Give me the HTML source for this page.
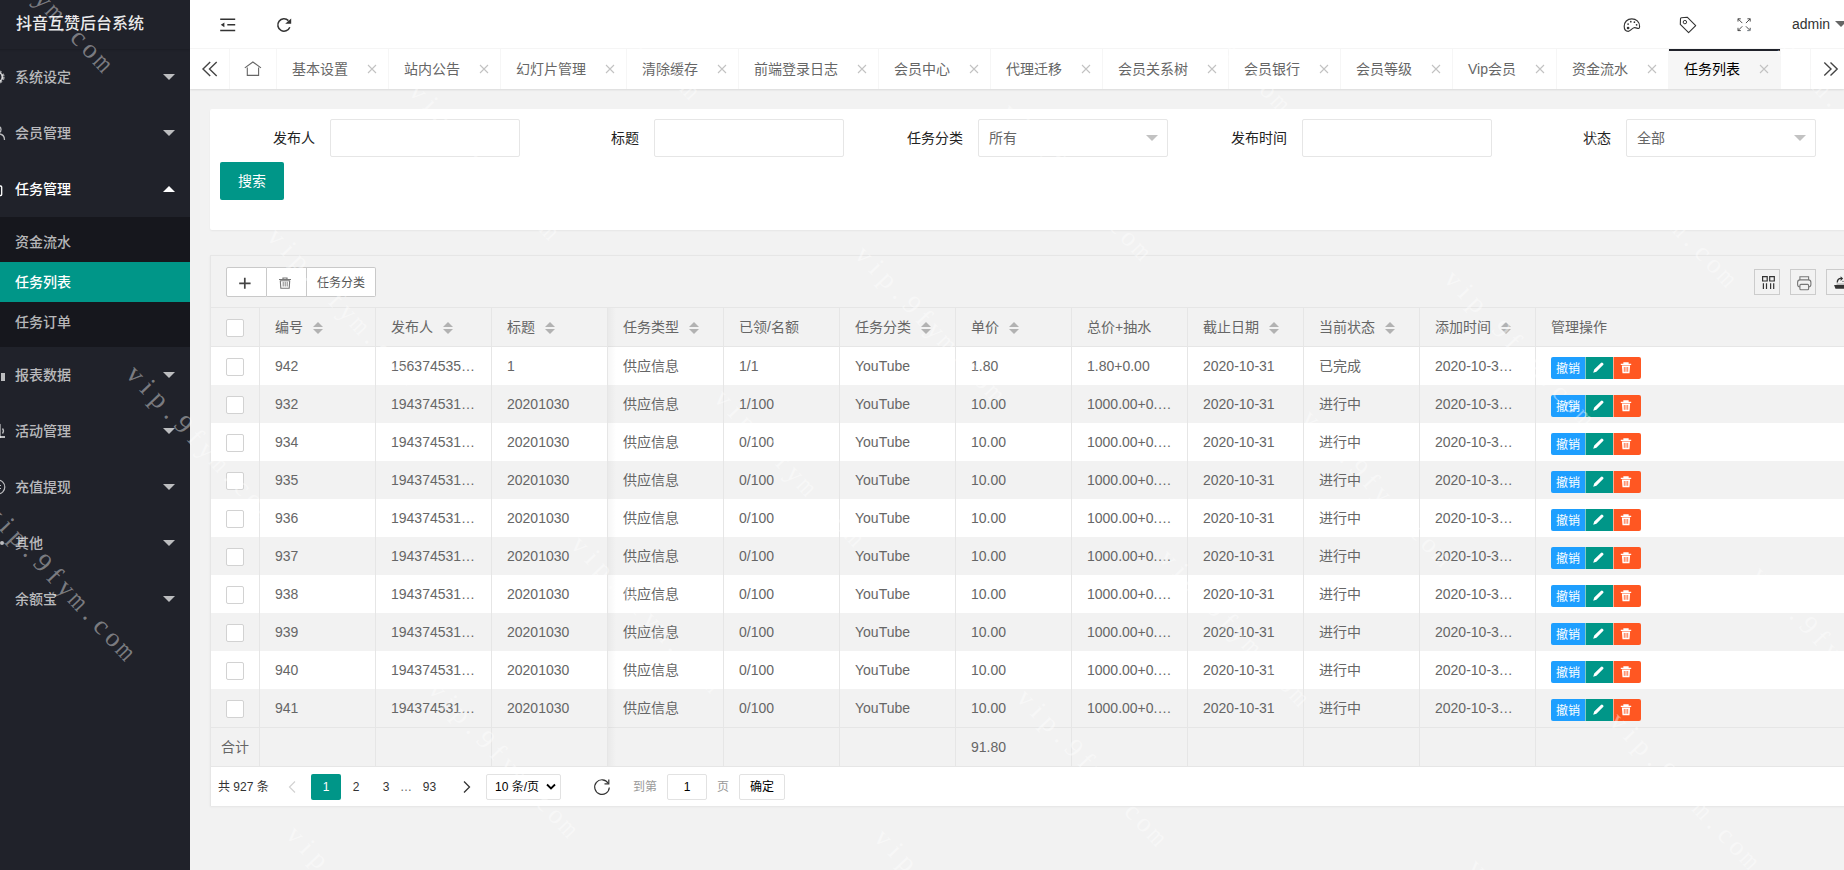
<!DOCTYPE html>
<html lang="zh-CN">
<head>
<meta charset="utf-8">
<title>抖音互赞后台系统</title>
<style>
*{box-sizing:border-box}
html,body{margin:0;padding:0}
body{width:1844px;height:870px;overflow:hidden;background:#f2f2f2;position:relative;
  font-family:"Liberation Sans","Noto Sans CJK SC",sans-serif;font-size:14px;line-height:24px;color:#333;-webkit-font-smoothing:antialiased}
a{text-decoration:none;color:inherit}
ul,li,dl,dd{margin:0;padding:0;list-style:none}
svg{display:block}
.abs{position:absolute}

/* ---------- side ---------- */
.side{position:absolute;left:0;top:0;width:190px;height:870px;background:#20222A;overflow:hidden;z-index:5;font-weight:500}
.logo{position:absolute;left:-30px;top:-1px;width:220px;height:50px;line-height:50px;text-align:center;color:rgba(255,255,255,.92);font-size:16px;box-shadow:0 1px 2px 0 rgba(0,0,0,.15)}
.nav{position:absolute;left:-30px;top:49px;width:220px}
.nav .item{position:relative;display:block}
.nav .item>a{display:block;position:relative;height:56px;line-height:56px;padding-left:45px;color:rgba(255,255,255,.7);font-size:14px}
.nav .item.open>a{color:#fff}
.nav .ico{position:absolute;left:20px;top:20px;width:16px;height:16px}
.nav .more{position:absolute;right:15px;top:25px;width:0;height:0;border:6px solid transparent;border-top-color:rgba(255,255,255,.7)}
.nav .item.open .more{top:19px;border-top-color:transparent;border-bottom-color:#fff}
.nav dl{background:rgba(0,0,0,.3);padding:5px 0}
.nav dd a{display:block;height:40px;line-height:40px;padding-left:45px;color:rgba(255,255,255,.7)}
.nav dd.this a{background:#009688;color:#fff}

/* ---------- header ---------- */
.header{position:absolute;left:190px;top:0;width:1654px;height:49px;background:#fff;border-bottom:1px solid #f6f6f6}
.header .hi{position:absolute}
.admin{position:absolute;left:1602px;top:0;height:48px;line-height:48px;color:#333;font-size:14px;white-space:nowrap}
.admin i{position:absolute;left:43px;top:21px;border:6px solid transparent;border-top-color:#666;width:0;height:0}

/* ---------- tabs ---------- */
.tabs{position:absolute;left:190px;top:49px;width:1654px;height:40px;background:#fff;box-shadow:0 1px 2px 0 rgba(0,0,0,.1);overflow:hidden}
.tabs .ctl{position:absolute;top:0;width:40px;height:40px;background:#fff}
.tabs .ctl.l{left:0;border-right:1px solid #f6f6f6}
.tabs .ctl.r{left:1620px;border-left:1px solid #f6f6f6}
.tabs ul{position:absolute;left:40px;top:0;height:40px;white-space:nowrap;font-size:0}
.tabs li{display:inline-block;vertical-align:top;position:relative;height:40px;line-height:40px;padding:0 40px 0 15px;border-right:1px solid #f6f6f6;font-size:14px;color:#666}
.tabs li.home{padding:0 15px;width:47px}
.tabs li.this{background:#f6f6f6;color:#000}
.tabs li.this:after{content:"";position:absolute;left:0;top:0;width:100%;height:2px;background:#20222A}
.tabs li .x{position:absolute;right:8px;top:12px;width:16px;height:16px}

/* ---------- search card ---------- */
.card{position:absolute;left:210px;top:109px;width:1700px;height:121px;background:#fff;border-radius:2px;box-shadow:0 1px 2px 0 rgba(0,0,0,.05)}
.flabel{position:absolute;top:10px;width:110px;height:38px;line-height:38px;padding:0 15px;text-align:right;color:#222;font-size:14px;white-space:nowrap}
.finput{position:absolute;top:10px;width:190px;height:38px;border:1px solid #e6e6e6;border-radius:2px;background:#fff;line-height:36px;padding-left:10px;color:#666;font-size:14px}
.finput i{position:absolute;right:9px;top:15px;width:0;height:0;border:6px solid transparent;border-top-color:#c2c2c2}
.btn{position:absolute;left:10px;top:53px;width:64px;height:38px;line-height:38px;background:#009688;color:#fff;text-align:center;border-radius:2px;font-size:14px}

/* ---------- table ---------- */
.tv{position:absolute;left:210px;top:255px;width:1700px;height:551px;border:1px solid #e6e6e6;border-bottom:none;background:#fff;box-shadow:0 1px 2px 0 rgba(0,0,0,.06)}
.tool{position:absolute;left:0;top:0;width:100%;height:52px;background:#f2f2f2;border-bottom:1px solid #e6e6e6}
.bg{position:absolute;left:15px;top:11px;height:30px;font-size:0;white-space:nowrap}
.bg span{display:inline-block;vertical-align:top;height:30px;line-height:30px;border:1px solid #c9c9c9;border-left:none;background:#fff;color:#555;font-size:12px;padding:0 10px;position:relative}
.bg span:first-child{border-left:1px solid #c9c9c9;border-radius:2px 0 0 2px}
.bg span:last-child{border-radius:0 2px 2px 0}
.bg span.ic{width:40px;padding:0}
.bg span.ic:first-child{width:41px}
.self{position:absolute;top:13px;width:26px;height:26px;border:1px solid #ccc}
table{border-collapse:separate;border-spacing:0;table-layout:fixed;position:absolute;left:0}
th,td{padding:0;border-right:1px solid #e6e6e6;height:38px;font-weight:normal;text-align:left;font-size:14px;color:#666}
th{background:#f2f2f2;border-bottom:1px solid #e6e6e6;height:39px}
.c{padding:0 15px;height:28px;line-height:28px;overflow:hidden;text-overflow:ellipsis;white-space:nowrap;position:relative}
tr.e td{background:#f2f2f2}
.cb{display:block;width:18px;height:18px;border:1px solid #d2d2d2;border-radius:2px;background:#fff;position:relative;top:6px;left:15px}
.sort{display:inline-block;vertical-align:middle;position:relative;width:10px;height:20px;margin-left:10px;top:-1px}
.sort:before,.sort:after{content:"";position:absolute;left:0;width:0;height:0;border:5px solid transparent}
.sort:before{top:0;border-bottom-color:#b2b2b2}
.sort:after{top:12px;border-top-color:#b2b2b2}
.ops{font-size:0;white-space:nowrap;height:22px;margin-top:5px}
.ops b{display:inline-block;vertical-align:top;height:22px;line-height:22px;font-size:12px;font-weight:normal;color:#fff;position:relative}
.ops .b1{line-height:24px;width:34px;background:#1E9FFF;border-radius:2px 0 0 2px;text-align:center}
.ops .b2{width:28px;background:#009688;border-left:1px solid rgba(255,255,255,.5)}
.ops .b3{width:28px;background:#FF5722;border-left:1px solid rgba(255,255,255,.5);border-radius:0 2px 2px 0}
.ops svg{position:absolute;left:5px;top:4px}
.total td{background:#f2f2f2;border-top:1px solid #e6e6e6;height:39px}
.page{position:absolute;left:0;top:510px;width:100%;height:40px;border-top:1px solid #e6e6e6;background:#fff;font-size:12px;color:#333}
.page .p{position:absolute;top:7px;height:26px;line-height:26px;white-space:nowrap}
.fixshadow{position:absolute;left:397px;top:52px;width:8px;height:458px;background:linear-gradient(to right,rgba(0,0,0,.035),rgba(0,0,0,0));pointer-events:none}
</style>
</head>
<body>
<div class="side">
  <div class="logo"><span>抖音互赞后台系统</span></div>
  <ul class="nav">
    <li class="item"><a><svg class="ico" viewBox="0 0 16 16"><circle cx="8" cy="8" r="5.2" fill="none" stroke="rgba(255,255,255,.55)" stroke-width="3" stroke-dasharray="2.6 1.5"/><circle cx="8" cy="8" r="4.4" fill="none" stroke="rgba(255,255,255,.7)" stroke-width="1.6"/></svg>系统设定<span class="more"></span></a></li>
    <li class="item"><a><svg class="ico" viewBox="0 0 16 16"><circle cx="8" cy="4.6" r="3" fill="none" stroke="rgba(255,255,255,.7)" stroke-width="1.3"/><path d="M1.5 15c0-4 2.6-6.2 6.5-6.2s6.5 2.2 6.5 6.2" fill="none" stroke="rgba(255,255,255,.7)" stroke-width="1.3"/></svg>会员管理<span class="more"></span></a></li>
    <li class="item open"><a><svg class="ico" viewBox="0 0 16 16"><rect x="0" y="5" width="11.700" height="9.500" rx="1" fill="none" stroke="#fff" stroke-width="1.300"/><path d="M3 5V2.500h5.500V5" fill="none" stroke="#fff" stroke-width="1.300"/></svg>任务管理<span class="more"></span></a>
      <dl>
        <dd><a>资金流水</a></dd>
        <dd class="this"><a>任务列表</a></dd>
        <dd><a>任务订单</a></dd>
      </dl>
    </li>
    <li class="item"><a><svg class="ico" viewBox="0 0 16 16"><path d="M1 14V8h3v6zM6 14V3h3v11zM11 14V6h4v8z" fill="rgba(255,255,255,.7)"/></svg>报表数据<span class="more"></span></a></li>
    <li class="item"><a><svg class="ico" viewBox="0 0 16 16"><path d="M2 6v4h3l5 4V2L5 6z" fill="none" stroke="rgba(255,255,255,.7)" stroke-width="1.3"/><path d="M12.5 5.5a4 4 0 0 1 0 5" fill="none" stroke="rgba(255,255,255,.7)" stroke-width="1.3"/><path d="M10 13h5v2h-5z" fill="rgba(255,255,255,.7)"/></svg>活动管理<span class="more"></span></a></li>
    <li class="item"><a><svg class="ico" viewBox="0 0 16 16"><circle cx="8" cy="8" r="6.8" fill="none" stroke="rgba(255,255,255,.7)" stroke-width="1.2"/><path d="M5 6.5h6M5 9.5h6M8 6.5V13" fill="none" stroke="rgba(255,255,255,.7)" stroke-width="1.2"/></svg>充值提现<span class="more"></span></a></li>
    <li class="item"><a><svg class="ico" viewBox="0 0 16 16"><circle cx="12" cy="8" r="2" fill="rgba(255,255,255,.7)"/><circle cx="4" cy="8" r="2" fill="rgba(255,255,255,.7)"/></svg>其他<span class="more"></span></a></li>
    <li class="item"><a>余额宝<span class="more"></span></a></li>
  </ul>
</div>
<div class="header">
  <svg class="hi" style="left:26px;top:14px" width="24" height="22" viewBox="216 14 24 22"><path d="M220.2 19.3H235.2M227.3 24.8H235.2M220.2 30.4H235.2" stroke="#333" stroke-width="1.5" fill="none"/><path d="M220.8 24.8L224.4 22.4V27.2Z" fill="#333"/></svg>
  <svg class="hi" style="left:84px;top:14px" width="22" height="22" viewBox="274 14 22 22"><path d="M288.4 20.6A6.2 6.2 0 1 0 289.8 27.2" stroke="#333" stroke-width="1.5" fill="none"/><path d="M291.2 18.4V23.8H285.2Z" fill="#333"/></svg>
  <svg class="hi" style="left:1430px;top:14px" width="24" height="22" viewBox="1620 14 24 22"><path d="M1639.600 26.400C1639.600 21.800 1636.200 18.800 1631.800 18.800C1627.200 18.800 1624.200 22.200 1624.200 26.300C1624.200 29.300 1626 31.300 1628.300 31.300C1630.500 31.300 1631.500 28.500 1634 27.800C1636 27.200 1637.500 28.900 1638.800 28.400C1639.400 28.100 1639.600 27.400 1639.600 26.400Z" fill="none" stroke="#333" stroke-width="1.150"/><circle cx="1628.100" cy="24.100" r=".850" fill="#333"/><circle cx="1630.800" cy="21.700" r=".850" fill="#333"/><circle cx="1634.400" cy="22.200" r=".850" fill="#333"/><circle cx="1636.600" cy="24.800" r=".850" fill="#333"/><circle cx="1628.100" cy="28" r="1.350" fill="#333"/></svg>
  <svg class="hi" style="left:1486px;top:14px" width="24" height="22" viewBox="1676 14 24 22"><path d="M1680.500 18.700Q1680.500 17.900 1681.400 17.800L1687.200 17.200L1695.700 25.600L1688.600 32.600L1680.300 24.400Z" fill="none" stroke="#333" stroke-width="1.100" stroke-linejoin="round"/><circle cx="1684.900" cy="22.100" r="1.700" fill="none" stroke="#333" stroke-width="1"/></svg>
  <svg class="hi" style="left:1544px;top:14px" width="20" height="22" viewBox="1734 14 20 22"><g fill="none" stroke="#444" stroke-width=".950"><path d="M1738 21.600v-2.800h2.800M1738 18.800l4.300 4.300"/><path d="M1750.200 21.600v-2.800h-2.800M1750.200 18.800l-4.300 4.300"/><path d="M1738 27.800v2.800h2.800M1738 30.600l4.300-4.300"/><path d="M1750.200 27.800v2.800h-2.800M1750.200 30.600l-4.300-4.300"/></g></svg>
  <div class="admin">admin<i></i></div>
</div>
<div class="tabs">
  <div class="ctl l"><svg class="abs" style="left:10px;top:10px" width="20" height="20" viewBox="200 59 20 20"><path d="M210.2 62.100L203 69L210.200 75.900M216.700 62.100L209.500 69L216.700 75.900" fill="none" stroke="#444" stroke-width="1.400"/></svg></div>
  <ul>
    <li class="home"><svg class="abs" style="left:13px;top:10px" width="20" height="20" viewBox="243 59 20 20"><path d="M244.800 67.900L252.900 62L261 67.900M247.300 67.600V75.400H258.600V67.600" fill="none" stroke="#666" stroke-width="1.100"/></svg></li>
    <li>基本设置<svg class="x" viewBox="0 0 16 16"><path d="M4 4l8 8M12 4l-8 8" stroke="#c2c2c2" stroke-width="1.100"/></svg></li>
    <li>站内公告<svg class="x" viewBox="0 0 16 16"><path d="M4 4l8 8M12 4l-8 8" stroke="#c2c2c2" stroke-width="1.100"/></svg></li>
    <li>幻灯片管理<svg class="x" viewBox="0 0 16 16"><path d="M4 4l8 8M12 4l-8 8" stroke="#c2c2c2" stroke-width="1.100"/></svg></li>
    <li>清除缓存<svg class="x" viewBox="0 0 16 16"><path d="M4 4l8 8M12 4l-8 8" stroke="#c2c2c2" stroke-width="1.100"/></svg></li>
    <li>前端登录日志<svg class="x" viewBox="0 0 16 16"><path d="M4 4l8 8M12 4l-8 8" stroke="#c2c2c2" stroke-width="1.100"/></svg></li>
    <li>会员中心<svg class="x" viewBox="0 0 16 16"><path d="M4 4l8 8M12 4l-8 8" stroke="#c2c2c2" stroke-width="1.100"/></svg></li>
    <li>代理迁移<svg class="x" viewBox="0 0 16 16"><path d="M4 4l8 8M12 4l-8 8" stroke="#c2c2c2" stroke-width="1.100"/></svg></li>
    <li>会员关系树<svg class="x" viewBox="0 0 16 16"><path d="M4 4l8 8M12 4l-8 8" stroke="#c2c2c2" stroke-width="1.100"/></svg></li>
    <li>会员银行<svg class="x" viewBox="0 0 16 16"><path d="M4 4l8 8M12 4l-8 8" stroke="#c2c2c2" stroke-width="1.100"/></svg></li>
    <li>会员等级<svg class="x" viewBox="0 0 16 16"><path d="M4 4l8 8M12 4l-8 8" stroke="#c2c2c2" stroke-width="1.100"/></svg></li>
    <li>Vip会员<svg class="x" viewBox="0 0 16 16"><path d="M4 4l8 8M12 4l-8 8" stroke="#c2c2c2" stroke-width="1.100"/></svg></li>
    <li>资金流水<svg class="x" viewBox="0 0 16 16"><path d="M4 4l8 8M12 4l-8 8" stroke="#c2c2c2" stroke-width="1.100"/></svg></li>
    <li class="this">任务列表<svg class="x" viewBox="0 0 16 16"><path d="M4 4l8 8M12 4l-8 8" stroke="#c2c2c2" stroke-width="1.100"/></svg></li>
  </ul>
  <div class="ctl r"><svg class="abs" style="left:9px;top:10px" width="22" height="20" viewBox="1820 59 22 20"><path d="M1824.300 62.600L1831 69L1824.300 75.400M1830.500 62.600L1837.200 69L1830.500 75.400" fill="none" stroke="#444" stroke-width="1.400"/></svg></div>
</div>
<div class="card">
  <label class="flabel" style="left:10px">发布人</label>
  <div class="finput" style="left:120px"></div>
  <label class="flabel" style="left:334px">标题</label>
  <div class="finput" style="left:444px"></div>
  <label class="flabel" style="left:658px">任务分类</label>
  <div class="finput" style="left:768px">所有<i></i></div>
  <label class="flabel" style="left:982px">发布时间</label>
  <div class="finput" style="left:1092px"></div>
  <label class="flabel" style="left:1306px">状态</label>
  <div class="finput" style="left:1416px">全部<i></i></div>
  <a class="btn">搜索</a>
</div>
<div class="tv">
  <div class="tool">
    <div class="bg"><span class="ic"><svg class="abs" style="left:10px;top:7px" width="16" height="16" viewBox="0 0 16 16"><path d="M7.800 2.800v11M2.200 8.300h11.400" stroke="#444" stroke-width="1.700"/></svg></span><span class="ic"><svg class="abs" style="left:10px;top:7px" width="16" height="16" viewBox="0 0 16 16"><path d="M2 4.500h12M6 4.300V3h4v1.300" fill="none" stroke="#777" stroke-width="1.200"/><path d="M3.300 5.800h9.400l-.5 7.400H3.800z" fill="none" stroke="#777" stroke-width="1.100" stroke-linejoin="round"/><path d="M6.200 6.800v4.700M8.200 6.800v4.700M10.200 6.800v4.700" stroke="#777" stroke-width=".900"/></svg></span><span>任务分类</span></div>
    <div class="self" style="left:1543px"><svg class="abs" style="left:3px;top:4px" width="20" height="16" viewBox="0 0 20 16"><path d="M4.600 2.600h4.600v4.400H4.600zM11.700 2.600h4.600v4.400h-4.600z" fill="none" stroke="#333" stroke-width="1.200"/><path d="M5.400 9.200v5.700M8.500 9.200v5.700M12.600 9.200v5.700M15.700 9.200v5.700" stroke="#333" stroke-width="1.200"/></svg></div>
    <div class="self" style="left:1579px"><svg class="abs" style="left:4px;top:4px" width="18" height="17" viewBox="0 0 18 17"><g fill="none" stroke="#777" stroke-width="1.100"><path d="M4.900 6V2.700h8.700V6"/><rect x="2.600" y="5.900" width="13.300" height="7" rx="2.500"/><rect x="4.900" y="10.400" width="8.700" height="5.300" rx="1" fill="#f2f2f2"/></g></svg></div>
    <div class="self" style="left:1615px"><svg class="abs" style="left:4px;top:4px" width="18" height="17" viewBox="0 0 18 17"><path d="M3.100 11.100H18V14.800H4.500Z" fill="#333"/><path d="M5.500 10.100H18" stroke="#888" stroke-width=".800"/><path d="M6.300 8.500C6.300 5.700 7.600 4.400 10 4.400" fill="none" stroke="#333" stroke-width="1.400"/><path d="M9.600 2.200L12.100 4.500L9.600 6.900Z" fill="#333"/><path d="M11 7.400H18" stroke="#777" stroke-width=".800"/></svg></div>
  </div>
  <table style="top:52px;width:1700px"><colgroup><col style="width:49px"><col style="width:116px"><col style="width:116px"><col style="width:116px"><col style="width:116px"><col style="width:116px"><col style="width:116px"><col style="width:116px"><col style="width:116px"><col style="width:116px"><col style="width:116px"><col style="width:116px"><col></colgroup>
    <tr><th><div class="c" style="padding:0"><i class="cb"></i></div></th><th><div class="c">编号<span class="sort"></span></div></th><th><div class="c">发布人<span class="sort"></span></div></th><th><div class="c">标题<span class="sort"></span></div></th><th><div class="c">任务类型<span class="sort"></span></div></th><th><div class="c">已领/名额</div></th><th><div class="c">任务分类<span class="sort"></span></div></th><th><div class="c">单价<span class="sort"></span></div></th><th><div class="c">总价+抽水</div></th><th><div class="c">截止日期<span class="sort"></span></div></th><th><div class="c">当前状态<span class="sort"></span></div></th><th><div class="c">添加时间<span class="sort"></span></div></th><th><div class="c">管理操作</div></th></tr>
  </table>
  <table style="top:91px;width:1700px"><colgroup><col style="width:49px"><col style="width:116px"><col style="width:116px"><col style="width:116px"><col style="width:116px"><col style="width:116px"><col style="width:116px"><col style="width:116px"><col style="width:116px"><col style="width:116px"><col style="width:116px"><col style="width:116px"><col></colgroup>
    <tr><td><div class="c" style="padding:0"><i class="cb"></i></div></td><td><div class="c">942</div></td><td><div class="c">156374535…</div></td><td><div class="c">1</div></td><td><div class="c">供应信息</div></td><td><div class="c">1/1</div></td><td><div class="c">YouTube</div></td><td><div class="c">1.80</div></td><td><div class="c">1.80+0.00</div></td><td><div class="c">2020-10-31</div></td><td><div class="c">已完成</div></td><td><div class="c">2020-10-3…</div></td><td><div class="c"><div class="ops"><b class="b1">撤销</b><b class="b2"><svg width="14" height="14" viewBox="0 0 14 14"><path d="M2.200 11.800L3.200 8.600L9.900 1.900a1.300 1.300 0 0 1 1.900 0l.3.300a1.300 1.300 0 0 1 0 1.900L5.400 10.800Z" fill="#fff"/></svg></b><b class="b3"><svg width="14" height="14" viewBox="0 0 14 14"><path d="M1.800 3.400h10.400M5 3.200V2h4v1.200" fill="none" stroke="#fff" stroke-width="1.300"/><path d="M2.900 4.600h8.200l-.6 7.600H3.500z" fill="#fff"/><path d="M5.300 6v4.800M7 6v4.800M8.700 6v4.800" stroke="#FF5722" stroke-width=".800"/></svg></b></div></div></td></tr>
    <tr class="e"><td><div class="c" style="padding:0"><i class="cb"></i></div></td><td><div class="c">932</div></td><td><div class="c">194374531…</div></td><td><div class="c">20201030</div></td><td><div class="c">供应信息</div></td><td><div class="c">1/100</div></td><td><div class="c">YouTube</div></td><td><div class="c">10.00</div></td><td><div class="c">1000.00+0.…</div></td><td><div class="c">2020-10-31</div></td><td><div class="c">进行中</div></td><td><div class="c">2020-10-3…</div></td><td><div class="c"><div class="ops"><b class="b1">撤销</b><b class="b2"><svg width="14" height="14" viewBox="0 0 14 14"><path d="M2.200 11.800L3.200 8.600L9.900 1.900a1.300 1.300 0 0 1 1.900 0l.3.300a1.300 1.300 0 0 1 0 1.900L5.400 10.800Z" fill="#fff"/></svg></b><b class="b3"><svg width="14" height="14" viewBox="0 0 14 14"><path d="M1.800 3.400h10.400M5 3.200V2h4v1.200" fill="none" stroke="#fff" stroke-width="1.300"/><path d="M2.900 4.600h8.200l-.6 7.600H3.500z" fill="#fff"/><path d="M5.300 6v4.800M7 6v4.800M8.700 6v4.800" stroke="#FF5722" stroke-width=".800"/></svg></b></div></div></td></tr>
    <tr><td><div class="c" style="padding:0"><i class="cb"></i></div></td><td><div class="c">934</div></td><td><div class="c">194374531…</div></td><td><div class="c">20201030</div></td><td><div class="c">供应信息</div></td><td><div class="c">0/100</div></td><td><div class="c">YouTube</div></td><td><div class="c">10.00</div></td><td><div class="c">1000.00+0.…</div></td><td><div class="c">2020-10-31</div></td><td><div class="c">进行中</div></td><td><div class="c">2020-10-3…</div></td><td><div class="c"><div class="ops"><b class="b1">撤销</b><b class="b2"><svg width="14" height="14" viewBox="0 0 14 14"><path d="M2.200 11.800L3.200 8.600L9.900 1.900a1.300 1.300 0 0 1 1.900 0l.3.300a1.300 1.300 0 0 1 0 1.900L5.400 10.800Z" fill="#fff"/></svg></b><b class="b3"><svg width="14" height="14" viewBox="0 0 14 14"><path d="M1.800 3.400h10.400M5 3.200V2h4v1.200" fill="none" stroke="#fff" stroke-width="1.300"/><path d="M2.900 4.600h8.200l-.6 7.600H3.500z" fill="#fff"/><path d="M5.300 6v4.800M7 6v4.800M8.700 6v4.800" stroke="#FF5722" stroke-width=".800"/></svg></b></div></div></td></tr>
    <tr class="e"><td><div class="c" style="padding:0"><i class="cb"></i></div></td><td><div class="c">935</div></td><td><div class="c">194374531…</div></td><td><div class="c">20201030</div></td><td><div class="c">供应信息</div></td><td><div class="c">0/100</div></td><td><div class="c">YouTube</div></td><td><div class="c">10.00</div></td><td><div class="c">1000.00+0.…</div></td><td><div class="c">2020-10-31</div></td><td><div class="c">进行中</div></td><td><div class="c">2020-10-3…</div></td><td><div class="c"><div class="ops"><b class="b1">撤销</b><b class="b2"><svg width="14" height="14" viewBox="0 0 14 14"><path d="M2.200 11.800L3.200 8.600L9.900 1.900a1.300 1.300 0 0 1 1.900 0l.3.300a1.300 1.300 0 0 1 0 1.900L5.400 10.800Z" fill="#fff"/></svg></b><b class="b3"><svg width="14" height="14" viewBox="0 0 14 14"><path d="M1.800 3.400h10.400M5 3.200V2h4v1.200" fill="none" stroke="#fff" stroke-width="1.300"/><path d="M2.900 4.600h8.200l-.6 7.600H3.500z" fill="#fff"/><path d="M5.300 6v4.800M7 6v4.800M8.700 6v4.800" stroke="#FF5722" stroke-width=".800"/></svg></b></div></div></td></tr>
    <tr><td><div class="c" style="padding:0"><i class="cb"></i></div></td><td><div class="c">936</div></td><td><div class="c">194374531…</div></td><td><div class="c">20201030</div></td><td><div class="c">供应信息</div></td><td><div class="c">0/100</div></td><td><div class="c">YouTube</div></td><td><div class="c">10.00</div></td><td><div class="c">1000.00+0.…</div></td><td><div class="c">2020-10-31</div></td><td><div class="c">进行中</div></td><td><div class="c">2020-10-3…</div></td><td><div class="c"><div class="ops"><b class="b1">撤销</b><b class="b2"><svg width="14" height="14" viewBox="0 0 14 14"><path d="M2.200 11.800L3.200 8.600L9.900 1.900a1.300 1.300 0 0 1 1.900 0l.3.300a1.300 1.300 0 0 1 0 1.900L5.400 10.800Z" fill="#fff"/></svg></b><b class="b3"><svg width="14" height="14" viewBox="0 0 14 14"><path d="M1.800 3.400h10.400M5 3.200V2h4v1.200" fill="none" stroke="#fff" stroke-width="1.300"/><path d="M2.900 4.600h8.200l-.6 7.600H3.500z" fill="#fff"/><path d="M5.300 6v4.800M7 6v4.800M8.700 6v4.800" stroke="#FF5722" stroke-width=".800"/></svg></b></div></div></td></tr>
    <tr class="e"><td><div class="c" style="padding:0"><i class="cb"></i></div></td><td><div class="c">937</div></td><td><div class="c">194374531…</div></td><td><div class="c">20201030</div></td><td><div class="c">供应信息</div></td><td><div class="c">0/100</div></td><td><div class="c">YouTube</div></td><td><div class="c">10.00</div></td><td><div class="c">1000.00+0.…</div></td><td><div class="c">2020-10-31</div></td><td><div class="c">进行中</div></td><td><div class="c">2020-10-3…</div></td><td><div class="c"><div class="ops"><b class="b1">撤销</b><b class="b2"><svg width="14" height="14" viewBox="0 0 14 14"><path d="M2.200 11.800L3.200 8.600L9.900 1.900a1.300 1.300 0 0 1 1.900 0l.3.300a1.300 1.300 0 0 1 0 1.900L5.400 10.800Z" fill="#fff"/></svg></b><b class="b3"><svg width="14" height="14" viewBox="0 0 14 14"><path d="M1.800 3.400h10.400M5 3.200V2h4v1.200" fill="none" stroke="#fff" stroke-width="1.300"/><path d="M2.900 4.600h8.200l-.6 7.600H3.500z" fill="#fff"/><path d="M5.300 6v4.800M7 6v4.800M8.700 6v4.800" stroke="#FF5722" stroke-width=".800"/></svg></b></div></div></td></tr>
    <tr><td><div class="c" style="padding:0"><i class="cb"></i></div></td><td><div class="c">938</div></td><td><div class="c">194374531…</div></td><td><div class="c">20201030</div></td><td><div class="c">供应信息</div></td><td><div class="c">0/100</div></td><td><div class="c">YouTube</div></td><td><div class="c">10.00</div></td><td><div class="c">1000.00+0.…</div></td><td><div class="c">2020-10-31</div></td><td><div class="c">进行中</div></td><td><div class="c">2020-10-3…</div></td><td><div class="c"><div class="ops"><b class="b1">撤销</b><b class="b2"><svg width="14" height="14" viewBox="0 0 14 14"><path d="M2.200 11.800L3.200 8.600L9.900 1.900a1.300 1.300 0 0 1 1.900 0l.3.300a1.300 1.300 0 0 1 0 1.900L5.400 10.800Z" fill="#fff"/></svg></b><b class="b3"><svg width="14" height="14" viewBox="0 0 14 14"><path d="M1.800 3.400h10.400M5 3.200V2h4v1.200" fill="none" stroke="#fff" stroke-width="1.300"/><path d="M2.900 4.600h8.200l-.6 7.600H3.500z" fill="#fff"/><path d="M5.300 6v4.800M7 6v4.800M8.700 6v4.800" stroke="#FF5722" stroke-width=".800"/></svg></b></div></div></td></tr>
    <tr class="e"><td><div class="c" style="padding:0"><i class="cb"></i></div></td><td><div class="c">939</div></td><td><div class="c">194374531…</div></td><td><div class="c">20201030</div></td><td><div class="c">供应信息</div></td><td><div class="c">0/100</div></td><td><div class="c">YouTube</div></td><td><div class="c">10.00</div></td><td><div class="c">1000.00+0.…</div></td><td><div class="c">2020-10-31</div></td><td><div class="c">进行中</div></td><td><div class="c">2020-10-3…</div></td><td><div class="c"><div class="ops"><b class="b1">撤销</b><b class="b2"><svg width="14" height="14" viewBox="0 0 14 14"><path d="M2.200 11.800L3.200 8.600L9.900 1.900a1.300 1.300 0 0 1 1.900 0l.3.300a1.300 1.300 0 0 1 0 1.900L5.400 10.800Z" fill="#fff"/></svg></b><b class="b3"><svg width="14" height="14" viewBox="0 0 14 14"><path d="M1.800 3.400h10.400M5 3.200V2h4v1.200" fill="none" stroke="#fff" stroke-width="1.300"/><path d="M2.900 4.600h8.200l-.6 7.600H3.500z" fill="#fff"/><path d="M5.300 6v4.800M7 6v4.800M8.700 6v4.800" stroke="#FF5722" stroke-width=".800"/></svg></b></div></div></td></tr>
    <tr><td><div class="c" style="padding:0"><i class="cb"></i></div></td><td><div class="c">940</div></td><td><div class="c">194374531…</div></td><td><div class="c">20201030</div></td><td><div class="c">供应信息</div></td><td><div class="c">0/100</div></td><td><div class="c">YouTube</div></td><td><div class="c">10.00</div></td><td><div class="c">1000.00+0.…</div></td><td><div class="c">2020-10-31</div></td><td><div class="c">进行中</div></td><td><div class="c">2020-10-3…</div></td><td><div class="c"><div class="ops"><b class="b1">撤销</b><b class="b2"><svg width="14" height="14" viewBox="0 0 14 14"><path d="M2.200 11.800L3.200 8.600L9.900 1.900a1.300 1.300 0 0 1 1.900 0l.3.300a1.300 1.300 0 0 1 0 1.900L5.400 10.800Z" fill="#fff"/></svg></b><b class="b3"><svg width="14" height="14" viewBox="0 0 14 14"><path d="M1.800 3.400h10.400M5 3.200V2h4v1.200" fill="none" stroke="#fff" stroke-width="1.300"/><path d="M2.900 4.600h8.200l-.6 7.600H3.500z" fill="#fff"/><path d="M5.300 6v4.800M7 6v4.800M8.700 6v4.800" stroke="#FF5722" stroke-width=".800"/></svg></b></div></div></td></tr>
    <tr class="e"><td><div class="c" style="padding:0"><i class="cb"></i></div></td><td><div class="c">941</div></td><td><div class="c">194374531…</div></td><td><div class="c">20201030</div></td><td><div class="c">供应信息</div></td><td><div class="c">0/100</div></td><td><div class="c">YouTube</div></td><td><div class="c">10.00</div></td><td><div class="c">1000.00+0.…</div></td><td><div class="c">2020-10-31</div></td><td><div class="c">进行中</div></td><td><div class="c">2020-10-3…</div></td><td><div class="c"><div class="ops"><b class="b1">撤销</b><b class="b2"><svg width="14" height="14" viewBox="0 0 14 14"><path d="M2.200 11.800L3.200 8.600L9.900 1.900a1.300 1.300 0 0 1 1.900 0l.3.300a1.300 1.300 0 0 1 0 1.900L5.400 10.800Z" fill="#fff"/></svg></b><b class="b3"><svg width="14" height="14" viewBox="0 0 14 14"><path d="M1.800 3.400h10.400M5 3.200V2h4v1.200" fill="none" stroke="#fff" stroke-width="1.300"/><path d="M2.900 4.600h8.200l-.6 7.600H3.500z" fill="#fff"/><path d="M5.300 6v4.800M7 6v4.800M8.700 6v4.800" stroke="#FF5722" stroke-width=".800"/></svg></b></div></div></td></tr>
    <tr class="total"><td><div class="c" style="padding:0;text-align:center">合计</div></td><td><div class="c"></div></td><td><div class="c"></div></td><td><div class="c"></div></td><td><div class="c"></div></td><td><div class="c"></div></td><td><div class="c"></div></td><td><div class="c">91.80</div></td><td><div class="c"></div></td><td><div class="c"></div></td><td><div class="c"></div></td><td><div class="c"></div></td><td><div class="c"></div></td></tr>
  </table>
  <div class="fixshadow"></div>
  <div class="page">
    <span class="p" style="left:7px">共 927 条</span>
    <svg class="abs" style="left:75px;top:12px" width="12" height="16" viewBox="0 0 12 16"><path d="M9 2.500L3.500 8L9 13.500" fill="none" stroke="#d2d2d2" stroke-width="1.200"/></svg>
    <span class="p" style="left:100px;width:30px;text-align:center;background:#009688;color:#fff;border-radius:2px">1</span>
    <span class="p" style="left:130px;width:30px;text-align:center">2</span>
    <span class="p" style="left:160px;width:30px;text-align:center">3</span>
    <span class="p" style="left:188px;width:14px;text-align:center;color:#666">…</span>
    <span class="p" style="left:200px;width:37px;text-align:center">93</span>
    <svg class="abs" style="left:250px;top:12px" width="12" height="16" viewBox="0 0 12 16"><path d="M3 2.500L8.500 8L3 13.500" fill="none" stroke="#333" stroke-width="1.300"/></svg>
    <span class="p" style="left:275px;width:75px;border:1px solid #e2e2e2;border-radius:2px;line-height:24px;padding-left:8px;color:#000;background:#fff">10 条/页<svg class="abs" style="left:59px;top:8px" width="10" height="8" viewBox="0 0 10 8"><path d="M1 1.500L5 5.500L9 1.500" fill="none" stroke="#000" stroke-width="1.800"/></svg></span>
    <svg class="abs" style="left:381px;top:10px" width="20" height="20" viewBox="0 0 20 20"><path d="M16.200 6.200A7.300 7.300 0 1 0 17.300 10.500" fill="none" stroke="#333" stroke-width="1.200"/><path d="M16.800 2.500v4.300h-4.300" fill="none" stroke="#333" stroke-width="1.200"/></svg>
    <span class="p" style="left:422px;color:#999">到第</span>
    <span class="p" style="left:456px;width:40px;border:1px solid #e2e2e2;border-radius:2px;line-height:24px;text-align:center;color:#000;background:#fff">1</span>
    <span class="p" style="left:506px;color:#999">页</span>
    <span class="p" style="left:528px;width:46px;border:1px solid #e2e2e2;border-radius:2px;line-height:24px;text-align:center;color:#000;background:#fff">确定</span>
  </div>
</div>
<svg class="wm" width="1844" height="870" viewBox="0 0 1844 870" style="position:absolute;left:0;top:0;z-index:20;pointer-events:none" font-family="Liberation Serif, serif" font-size="27" fill="#fff" fill-opacity=".42" text-anchor="middle">
<text transform="translate(-29.5 -74.0) rotate(46.5)" y="6.2"><tspan x="0.0 17.3 34.6 51.9 69.2 86.5 103.8">vip.9fy</tspan><tspan x="121.1" textLength="15.500" lengthAdjust="spacingAndGlyphs">m</tspan><tspan x="138.4 155.7 173.0">.co</tspan><tspan x="190.3" textLength="15.500" lengthAdjust="spacingAndGlyphs">m</tspan></text>
<text transform="translate(-6.8 514.4) rotate(46.5)" y="6.2"><tspan x="0.0 17.3 34.6 51.9 69.2 86.5 103.8">vip.9fy</tspan><tspan x="121.1" textLength="15.500" lengthAdjust="spacingAndGlyphs">m</tspan><tspan x="138.4 155.7 173.0">.co</tspan><tspan x="190.3" textLength="15.500" lengthAdjust="spacingAndGlyphs">m</tspan></text>
<text transform="translate(134.0 376.0) rotate(46.5)" y="6.2"><tspan x="0.0 17.3 34.6 51.9 69.2 86.5 103.8">vip.9fy</tspan><tspan x="121.1" textLength="15.500" lengthAdjust="spacingAndGlyphs">m</tspan><tspan x="138.4 155.7 173.0">.co</tspan><tspan x="190.3" textLength="15.500" lengthAdjust="spacingAndGlyphs">m</tspan></text>
<text transform="translate(275.0 238.4) rotate(46.5)" y="6.2"><tspan x="0.0 17.3 34.6 51.9 69.2 86.5 103.8">vip.9fy</tspan><tspan x="121.1" textLength="15.500" lengthAdjust="spacingAndGlyphs">m</tspan><tspan x="138.4 155.7 173.0">.co</tspan><tspan x="190.3" textLength="15.500" lengthAdjust="spacingAndGlyphs">m</tspan></text>
<text transform="translate(417.0 93.5) rotate(46.5)" y="6.2"><tspan x="0.0 17.3 34.6 51.9 69.2 86.5 103.8">vip.9fy</tspan><tspan x="121.1" textLength="15.500" lengthAdjust="spacingAndGlyphs">m</tspan><tspan x="138.4 155.7 173.0">.co</tspan><tspan x="190.3" textLength="15.500" lengthAdjust="spacingAndGlyphs">m</tspan></text>
<text transform="translate(557.6 -47.0) rotate(46.5)" y="6.2"><tspan x="0.0 17.3 34.6 51.9 69.2 86.5 103.8">vip.9fy</tspan><tspan x="121.1" textLength="15.500" lengthAdjust="spacingAndGlyphs">m</tspan><tspan x="138.4 155.7 173.0">.co</tspan><tspan x="190.3" textLength="15.500" lengthAdjust="spacingAndGlyphs">m</tspan></text>
<text transform="translate(293.8 836.3) rotate(46.5)" y="6.2"><tspan x="0.0 17.3 34.6 51.9 69.2 86.5 103.8">vip.9fy</tspan><tspan x="121.1" textLength="15.500" lengthAdjust="spacingAndGlyphs">m</tspan><tspan x="138.4 155.7 173.0">.co</tspan><tspan x="190.3" textLength="15.500" lengthAdjust="spacingAndGlyphs">m</tspan></text>
<text transform="translate(436.2 691.3) rotate(46.5)" y="6.2"><tspan x="0.0 17.3 34.6 51.9 69.2 86.5 103.8">vip.9fy</tspan><tspan x="121.1" textLength="15.500" lengthAdjust="spacingAndGlyphs">m</tspan><tspan x="138.4 155.7 173.0">.co</tspan><tspan x="190.3" textLength="15.500" lengthAdjust="spacingAndGlyphs">m</tspan></text>
<text transform="translate(578.6 546.3) rotate(46.5)" y="6.2"><tspan x="0.0 17.3 34.6 51.9 69.2 86.5 103.8">vip.9fy</tspan><tspan x="121.1" textLength="15.500" lengthAdjust="spacingAndGlyphs">m</tspan><tspan x="138.4 155.7 173.0">.co</tspan><tspan x="190.3" textLength="15.500" lengthAdjust="spacingAndGlyphs">m</tspan></text>
<text transform="translate(722.0 400.0) rotate(46.5)" y="6.2"><tspan x="0.0 17.3 34.6 51.9 69.2 86.5 103.8">vip.9fy</tspan><tspan x="121.1" textLength="15.500" lengthAdjust="spacingAndGlyphs">m</tspan><tspan x="138.4 155.7 173.0">.co</tspan><tspan x="190.3" textLength="15.500" lengthAdjust="spacingAndGlyphs">m</tspan></text>
<text transform="translate(862.6 256.4) rotate(46.5)" y="6.2"><tspan x="0.0 17.3 34.6 51.9 69.2 86.5 103.8">vip.9fy</tspan><tspan x="121.1" textLength="15.500" lengthAdjust="spacingAndGlyphs">m</tspan><tspan x="138.4 155.7 173.0">.co</tspan><tspan x="190.3" textLength="15.500" lengthAdjust="spacingAndGlyphs">m</tspan></text>
<text transform="translate(1009.0 114.0) rotate(46.5)" y="6.2"><tspan x="0.0 17.3 34.6 51.9 69.2 86.5 103.8">vip.9fy</tspan><tspan x="121.1" textLength="15.500" lengthAdjust="spacingAndGlyphs">m</tspan><tspan x="138.4 155.7 173.0">.co</tspan><tspan x="190.3" textLength="15.500" lengthAdjust="spacingAndGlyphs">m</tspan></text>
<text transform="translate(1148.0 -34.0) rotate(46.5)" y="6.2"><tspan x="0.0 17.3 34.6 51.9 69.2 86.5 103.8">vip.9fy</tspan><tspan x="121.1" textLength="15.500" lengthAdjust="spacingAndGlyphs">m</tspan><tspan x="138.4 155.7 173.0">.co</tspan><tspan x="190.3" textLength="15.500" lengthAdjust="spacingAndGlyphs">m</tspan></text>
<text transform="translate(882.0 839.4) rotate(46.5)" y="6.2"><tspan x="0.0 17.3 34.6 51.9 69.2 86.5 103.8">vip.9fy</tspan><tspan x="121.1" textLength="15.500" lengthAdjust="spacingAndGlyphs">m</tspan><tspan x="138.4 155.7 173.0">.co</tspan><tspan x="190.3" textLength="15.500" lengthAdjust="spacingAndGlyphs">m</tspan></text>
<text transform="translate(1024.5 699.7) rotate(46.5)" y="6.2"><tspan x="0.0 17.3 34.6 51.9 69.2 86.5 103.8">vip.9fy</tspan><tspan x="121.1" textLength="15.500" lengthAdjust="spacingAndGlyphs">m</tspan><tspan x="138.4 155.7 173.0">.co</tspan><tspan x="190.3" textLength="15.500" lengthAdjust="spacingAndGlyphs">m</tspan></text>
<text transform="translate(1167.0 560.0) rotate(46.5)" y="6.2"><tspan x="0.0 17.3 34.6 51.9 69.2 86.5 103.8">vip.9fy</tspan><tspan x="121.1" textLength="15.500" lengthAdjust="spacingAndGlyphs">m</tspan><tspan x="138.4 155.7 173.0">.co</tspan><tspan x="190.3" textLength="15.500" lengthAdjust="spacingAndGlyphs">m</tspan></text>
<text transform="translate(1309.5 420.3) rotate(46.5)" y="6.2"><tspan x="0.0 17.3 34.6 51.9 69.2 86.5 103.8">vip.9fy</tspan><tspan x="121.1" textLength="15.500" lengthAdjust="spacingAndGlyphs">m</tspan><tspan x="138.4 155.7 173.0">.co</tspan><tspan x="190.3" textLength="15.500" lengthAdjust="spacingAndGlyphs">m</tspan></text>
<text transform="translate(1452.0 280.6) rotate(46.5)" y="6.2"><tspan x="0.0 17.3 34.6 51.9 69.2 86.5 103.8">vip.9fy</tspan><tspan x="121.1" textLength="15.500" lengthAdjust="spacingAndGlyphs">m</tspan><tspan x="138.4 155.7 173.0">.co</tspan><tspan x="190.3" textLength="15.500" lengthAdjust="spacingAndGlyphs">m</tspan></text>
<text transform="translate(1594.5 140.9) rotate(46.5)" y="6.2"><tspan x="0.0 17.3 34.6 51.9 69.2 86.5 103.8">vip.9fy</tspan><tspan x="121.1" textLength="15.500" lengthAdjust="spacingAndGlyphs">m</tspan><tspan x="138.4 155.7 173.0">.co</tspan><tspan x="190.3" textLength="15.500" lengthAdjust="spacingAndGlyphs">m</tspan></text>
<text transform="translate(1737.0 1.2) rotate(46.5)" y="6.2"><tspan x="0.0 17.3 34.6 51.9 69.2 86.5 103.8">vip.9fy</tspan><tspan x="121.1" textLength="15.500" lengthAdjust="spacingAndGlyphs">m</tspan><tspan x="138.4 155.7 173.0">.co</tspan><tspan x="190.3" textLength="15.500" lengthAdjust="spacingAndGlyphs">m</tspan></text>
<text transform="translate(1475.5 869.4) rotate(46.5)" y="6.2"><tspan x="0.0 17.3 34.6 51.9 69.2 86.5 103.8">vip.9fy</tspan><tspan x="121.1" textLength="15.500" lengthAdjust="spacingAndGlyphs">m</tspan><tspan x="138.4 155.7 173.0">.co</tspan><tspan x="190.3" textLength="15.500" lengthAdjust="spacingAndGlyphs">m</tspan></text>
<text transform="translate(1617.4 723.2) rotate(46.5)" y="6.2"><tspan x="0.0 17.3 34.6 51.9 69.2 86.5 103.8">vip.9fy</tspan><tspan x="121.1" textLength="15.500" lengthAdjust="spacingAndGlyphs">m</tspan><tspan x="138.4 155.7 173.0">.co</tspan><tspan x="190.3" textLength="15.500" lengthAdjust="spacingAndGlyphs">m</tspan></text>
<text transform="translate(1759.3 577.0) rotate(46.5)" y="6.2"><tspan x="0.0 17.3 34.6 51.9 69.2 86.5 103.8">vip.9fy</tspan><tspan x="121.1" textLength="15.500" lengthAdjust="spacingAndGlyphs">m</tspan><tspan x="138.4 155.7 173.0">.co</tspan><tspan x="190.3" textLength="15.500" lengthAdjust="spacingAndGlyphs">m</tspan></text>
</svg>
</body></html>
